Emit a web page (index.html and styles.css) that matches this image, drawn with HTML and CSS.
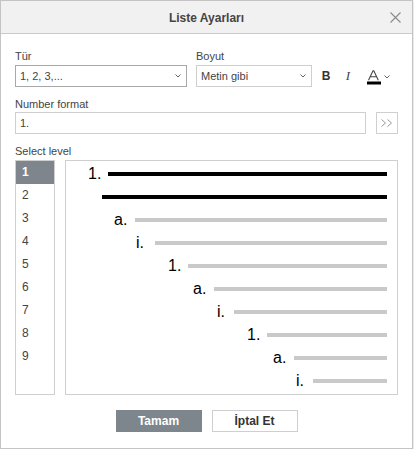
FILE: index.html
```html
<!DOCTYPE html>
<html lang="tr">
<head>
<meta charset="utf-8">
<title>Liste Ayarları</title>
<link rel="stylesheet" href="styles.css">
</head>
<body>
<div class="dialog">
  <div class="header">
    <span class="spacer"></span>
    <span class="title">Liste Ayarları</span>
    <button class="close" aria-label="Kapat">
      <svg width="11" height="11" viewBox="0 0 11 11"><path d="M0.5 0.5 L10.5 10.5 M10.5 0.5 L0.5 10.5" stroke="#8a8a8a" stroke-width="1.1" fill="none"/></svg>
    </button>
  </div>
  <div class="body">
    <div class="row-top">
      <div class="field type">
        <div class="label">Tür</div>
        <div class="select focused">
          <span>1, 2, 3,...</span>
          <svg class="chev" width="6" height="4" viewBox="0 0 6 4"><path d="M0.5 0.5 L3 3 L5.5 0.5" stroke="#666" stroke-width="1" fill="none"/></svg>
        </div>
      </div>
      <div class="field size">
        <div class="label">Boyut</div>
        <div class="select">
          <span>Metin gibi</span>
          <svg class="chev" width="6" height="4" viewBox="0 0 6 4"><path d="M0.5 0.5 L3 3 L5.5 0.5" stroke="#666" stroke-width="1" fill="none"/></svg>
        </div>
      </div>
      <div class="tools">
        <button class="tool bold">B</button>
        <button class="tool italic">I</button>
        <button class="tool color">
          <svg width="14" height="15" viewBox="0 0 14 15"><path d="M1.5 10.2 L6 0.8 L6.8 0.8 L11.3 10.2 M3.3 6.8 L9.5 6.8" stroke="#444" stroke-width="1.1" fill="none"/><rect x="0" y="11.5" width="14" height="3" fill="#000"/></svg>
          <svg class="chev" width="6" height="4" viewBox="0 0 6 4"><path d="M0.5 0.5 L3 3 L5.5 0.5" stroke="#666" stroke-width="1" fill="none"/></svg>
        </button>
      </div>
    </div>

    <div class="label nf-label">Number format</div>
    <div class="row-format">
      <div class="input">1.</div>
      <button class="more" aria-label="Daha fazla">
        <svg width="12" height="8" viewBox="0 0 12 8"><path d="M0.5 0.5 L4.5 4 L0.5 7.5 M6.5 0.5 L10.5 4 L6.5 7.5" stroke="#999" stroke-width="1" fill="none"/></svg>
      </button>
    </div>

    <div class="label lvl-label">Select level</div>
    <div class="row-levels">
      <ul class="levels">
        <li class="selected">1</li>
        <li>2</li>
        <li>3</li>
        <li>4</li>
        <li>5</li>
        <li>6</li>
        <li>7</li>
        <li>8</li>
        <li>9</li>
      </ul>
      <div class="preview">
        <div class="prow r1"><span class="num">1.</span><span class="bar dark"></span></div>
        <div class="prow r2"><span class="bar dark"></span></div>
        <div class="prow r3"><span class="num">a.</span><span class="bar"></span></div>
        <div class="prow r4"><span class="num">i.</span><span class="bar"></span></div>
        <div class="prow r5"><span class="num">1.</span><span class="bar"></span></div>
        <div class="prow r6"><span class="num">a.</span><span class="bar"></span></div>
        <div class="prow r7"><span class="num">i.</span><span class="bar"></span></div>
        <div class="prow r8"><span class="num">1.</span><span class="bar"></span></div>
        <div class="prow r9"><span class="num">a.</span><span class="bar"></span></div>
        <div class="prow r10"><span class="num">i.</span><span class="bar"></span></div>
      </div>
    </div>
  </div>
  <div class="footer">
    <button class="btn primary">Tamam</button>
    <button class="btn">İptal Et</button>
  </div>
</div>
</body>
</html>
```

FILE: styles.css
```css
* { box-sizing: border-box; }

html, body {
  margin: 0;
  padding: 0;
  background: #fff;
}

body {
  font-family: "Liberation Sans", Arial, sans-serif;
  color: #444;
}

button {
  font-family: inherit;
  margin: 0;
  padding: 0;
  background: none;
  border: none;
  cursor: pointer;
}

.dialog {
  width: 413px;
  height: 449px;
  border: 1px solid #c4c4c4;
  box-shadow: 0 1px 2px rgba(0, 0, 0, 0.25);
  background: #fff;
  display: flex;
  flex-direction: column;
}

.header {
  height: 33px;
  background: #f1f1f1;
  border-bottom: 1px solid #cbcbcb;
  display: grid;
  grid-template-columns: 1fr auto 1fr;
  align-items: center;
  padding: 0 6px 0 6px;
}

.title {
  font-size: 12px;
  font-weight: bold;
  color: #444;
  line-height: 14px;
  padding-top: 2px;
}

.close {
  justify-self: end;
  width: 22px;
  height: 22px;
  display: flex;
  align-items: center;
  justify-content: center;
  margin-top: 1px;
}

.body {
  padding: 16px 14px 0 14px;
  display: flex;
  flex-direction: column;
}

.label {
  font-size: 11px;
  line-height: 13px;
  color: #444;
  height: 13px;
}

.row-top {
  display: flex;
  align-items: flex-end;
}

.field .label {
  margin-bottom: 2px;
}

.field.type { width: 172px; }
.field.size { width: 116px; margin-left: 9px; }

.select {
  height: 22px;
  border: 1px solid #cfcfcf;
  display: flex;
  align-items: center;
  justify-content: space-between;
  padding: 0 5px 0 4px;
  font-size: 11px;
  color: #444;
  background: #fff;
}

.select.focused { border-color: #a8a8a8; }

.chev { display: block; flex: none; }

.tools {
  display: flex;
  height: 22px;
  align-items: center;
  margin-left: 3px;
}

.tool {
  height: 22px;
  width: 22px;
  display: flex;
  align-items: center;
  justify-content: center;
  color: #333;
}

.tool.bold {
  font-size: 12px;
  font-weight: bold;
  line-height: 14px;
}

.tool.italic {
  font-family: "Liberation Serif", "Times New Roman", serif;
  font-style: italic;
  font-size: 13px;
  line-height: 14px;
  color: #444;
  margin-left: 0;
}

.tool.color {
  width: 36px;
  padding-left: 8px;
  gap: 3px;
  justify-content: flex-start;
  padding-top: 2px;
}

.nf-label { margin-top: 11px; margin-bottom: 1px; }

.row-format {
  display: flex;
  gap: 10px;
}

.input {
  width: 351px;
  height: 22px;
  border: 1px solid #cfcfcf;
  font-size: 11px;
  line-height: 20px;
  padding-left: 4px;
  color: #444;
}

.more {
  width: 22px;
  height: 22px;
  border: 1px solid #cfcfcf;
  display: flex;
  align-items: center;
  justify-content: center;
}

.lvl-label { margin-top: 11px; margin-bottom: 2px; }

.row-levels {
  display: flex;
  gap: 10px;
  height: 235px;
}

.levels {
  list-style: none;
  margin: 0;
  padding: 0;
  width: 40px;
  border: 1px solid #cfcfcf;
}

.levels li {
  height: 23px;
  line-height: 23px;
  font-size: 12px;
  padding-left: 6px;
  color: #444;
}

.levels li.selected {
  background: #7e858c;
  color: #fff;
  font-weight: bold;
}

.preview {
  flex: 1;
  border: 1px solid #cfcfcf;
  padding: 1px 10px 0 0;
  font-family: "Liberation Sans", Arial, sans-serif;
}

.prow {
  height: 23px;
  display: flex;
  align-items: center;
}

.num {
  font-size: 16px;
  line-height: 16px;
  color: #000;
  flex: none;
}

.bar {
  flex: 1;
  height: 4px;
  background: #c9c9c9;
}

.bar.dark { background: #000; }

.r1 { padding-left: 22px; }
.r1 .num { width: 20px; }
.r2 { padding-left: 36px; }
.r3 { padding-left: 48px; }
.r3 .num { width: 21px; }
.r4 { padding-left: 70px; }
.r4 .num { width: 19px; }
.r5 { padding-left: 102px; }
.r5 .num { width: 20px; }
.r6 { padding-left: 127px; }
.r6 .num { width: 21px; }
.r7 { padding-left: 151px; }
.r7 .num { width: 17px; }
.r8 { padding-left: 181px; }
.r8 .num { width: 20px; }
.r9 { padding-left: 207px; }
.r9 .num { width: 21px; }
.r10 { padding-left: 230px; }
.r10 .num { width: 17px; }

.footer {
  margin-top: 15px;
  display: flex;
  justify-content: center;
  gap: 10px;
}

.btn {
  width: 86px;
  height: 22px;
  border: 1px solid #cfcfcf;
  background: #fff;
  font-size: 12px;
  font-weight: bold;
  color: #333;
}

.btn.primary {
  background: #7e868d;
  border-color: #7e868d;
  color: #fff;
}
```
